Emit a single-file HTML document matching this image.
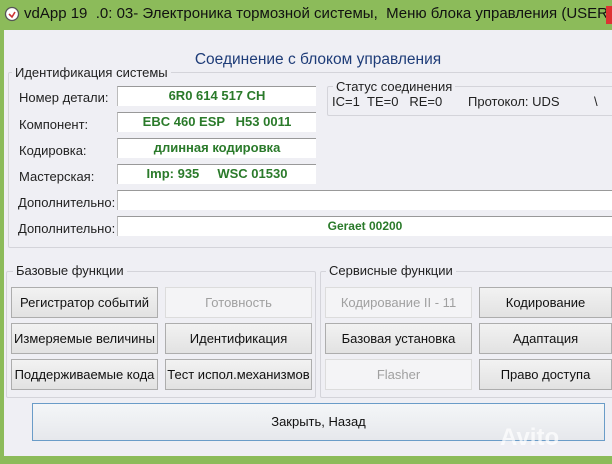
<!DOCTYPE html>
<html><head><meta charset="utf-8"><style>
*{margin:0;padding:0;box-sizing:border-box}
body{width:612px;height:464px;overflow:hidden;background:#8cbb5a;font-family:"Liberation Sans",sans-serif;position:relative}
.a{position:absolute}
#title{left:0;top:0;width:606px;height:30px;background:#8cbb5a;color:#111;font-size:15px;line-height:28px;padding-left:24px;white-space:nowrap;overflow:hidden}
#content{left:4px;top:30px;width:608px;height:426px;background:#efeff4}
.lbl{font-size:13px;color:#222;white-space:nowrap}
.fld{background:#fff;border-top:1px solid #999;border-left:1px solid #bbb;color:#2a7a2a;font-weight:bold;font-size:13px;text-align:center;line-height:18px;white-space:nowrap;overflow:hidden}
.grp{border:1px solid #d4d4da;border-radius:2px}
.gt{background:#efeff4;font-size:13px;color:#222;padding:0 3px;white-space:nowrap}
.btn{background:linear-gradient(#f2f2f2,#e2e2e2);border:1px solid #adadad;font-size:13px;color:#111;text-align:center;line-height:29px;white-space:nowrap;overflow:hidden}
.dis{background:#f4f4f6;border-color:#dcdcdc;color:#a0a0a0}
</style></head><body>
<div id="title" class="a">vdApp 19 &nbsp;.0: 03- Электроника тормозной системы, &nbsp;Меню блока управления (USER...</div>
<svg class="a" style="left:4px;top:6px" width="16" height="16" viewBox="0 0 16 16"><circle cx="8" cy="8" r="6.5" fill="#fff" stroke="#555" stroke-width="1.3"/><path d="M5 8l3 3 3-5" stroke="#c33" stroke-width="1.6" fill="none"/></svg>
<div class="a" style="left:606px;top:6px;width:6px;height:18px;background:#d33"></div>
<div id="content" class="a"></div>
<div class="a" style="left:0;top:51px;width:636px;text-align:center;font-size:15.5px;color:#1e3c78">Соединение с блоком управления</div>

<div class="a grp" style="left:8px;top:72px;width:610px;height:176px"></div>
<div class="a gt" style="left:12px;top:65px">Идентификация системы</div>
<div class="a grp" style="left:327px;top:86px;width:290px;height:30px"></div>
<div class="a gt" style="left:333px;top:79px">Статус соединения</div>
<div class="a lbl" style="left:332px;top:94px">IC=1 &nbsp;TE=0 &nbsp; RE=0</div>
<div class="a lbl" style="left:468px;top:94px">Протокол: UDS</div>
<div class="a lbl" style="left:594px;top:94px">\</div>

<div class="a lbl" style="left:19px;top:90px">Номер детали:</div>
<div class="a lbl" style="left:19px;top:117px">Компонент:</div>
<div class="a lbl" style="left:19px;top:143px">Кодировка:</div>
<div class="a lbl" style="left:19px;top:169px">Мастерская:</div>
<div class="a lbl" style="left:18px;top:195px">Дополнительно:</div>
<div class="a lbl" style="left:18px;top:221px">Дополнительно:</div>
<div class="a fld" style="left:117px;top:86px;width:199px;height:20px">6R0 614 517 CH</div>
<div class="a fld" style="left:117px;top:112px;width:199px;height:20px">EBC 460 ESP &nbsp; H53 0011</div>
<div class="a fld" style="left:117px;top:138px;width:199px;height:20px">длинная кодировка</div>
<div class="a fld" style="left:117px;top:164px;width:199px;height:20px">Imp: 935 &nbsp; &nbsp; WSC 01530</div>
<div class="a fld" style="left:117px;top:190px;width:495px;height:20px"></div>
<div class="a fld" style="left:117px;top:216px;width:495px;height:20px;font-size:12px">Geraet 00200</div>

<div class="a grp" style="left:6px;top:271px;width:310px;height:127px"></div>
<div class="a gt" style="left:13px;top:263px">Базовые функции</div>
<div class="a grp" style="left:320px;top:271px;width:300px;height:127px"></div>
<div class="a gt" style="left:326px;top:263px">Сервисные функции</div>

<div class="a btn" style="left:11px;top:287px;width:147px;height:31px">Регистратор событий</div>
<div class="a btn dis" style="left:165px;top:287px;width:147px;height:31px">Готовность</div>
<div class="a btn" style="left:11px;top:323px;width:147px;height:31px">Измеряемые величины</div>
<div class="a btn" style="left:165px;top:323px;width:147px;height:31px">Идентификация</div>
<div class="a btn" style="left:11px;top:359px;width:147px;height:31px">Поддерживаемые кода</div>
<div class="a btn" style="left:165px;top:359px;width:147px;height:31px">Тест испол.механизмов</div>
<div class="a btn dis" style="left:325px;top:287px;width:147px;height:31px">Кодирование II - 11</div>
<div class="a btn" style="left:479px;top:287px;width:133px;height:31px">Кодирование</div>
<div class="a btn" style="left:325px;top:323px;width:147px;height:31px">Базовая установка</div>
<div class="a btn" style="left:479px;top:323px;width:133px;height:31px">Адаптация</div>
<div class="a btn dis" style="left:325px;top:359px;width:147px;height:31px">Flasher</div>
<div class="a btn" style="left:479px;top:359px;width:133px;height:31px">Право доступа</div>

<div class="a btn" style="left:32px;top:403px;width:573px;height:38px;line-height:36px;border-color:#6a9cc8;background:linear-gradient(#f4f6f8,#e6e8ec)">Закрыть, Назад</div>
<div class="a" style="left:500px;top:424px;font-size:24px;font-weight:bold;color:rgba(255,255,255,0.7)">Avito</div>
</body></html>
